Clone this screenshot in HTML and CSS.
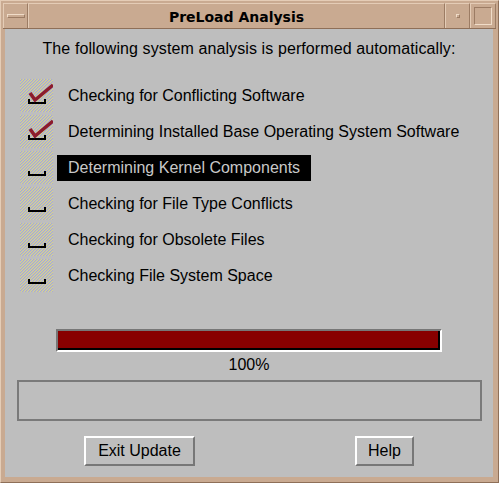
FILE: index.html
```html
<!DOCTYPE html>
<html>
<head>
<meta charset="utf-8">
<title>PreLoad Analysis</title>
<link rel="stylesheet" href="styles.css">
</head>
<body>
<svg class="defs" width="0" height="0" aria-hidden="true">
  <defs>
    <pattern id="stipple" width="3" height="3" patternUnits="userSpaceOnUse">
      <rect width="3" height="3" fill="#bcbcbc"/>
      <rect x="0" y="0" width="1" height="1" fill="#d8d68a"/>
      <rect x="1" y="0" width="1" height="1" fill="#a6a8da"/>
      <rect x="2" y="1" width="1" height="1" fill="#d8d68a"/>
      <rect x="0" y="1" width="1" height="1" fill="#a6a8da"/>
      <rect x="1" y="2" width="1" height="1" fill="#d8d68a"/>
      <rect x="2" y="2" width="1" height="1" fill="#a6a8da"/>
    </pattern>
  </defs>
</svg>
<div class="window">
  <div class="titlebar">
    <div class="tb-btn tb-menu"><span class="menu-bar"></span></div>
    <div class="tb-title">PreLoad Analysis</div>
    <div class="tb-btn tb-min"><span class="min-dot"></span></div>
    <div class="tb-btn tb-max"><span class="max-box"></span></div>
  </div>
  <div class="client">
    <div class="heading">The following system analysis is performed automatically:</div>
    <div class="rows">
      <div class="row">
        <svg class="box" width="33" height="33" viewBox="0 0 33 33">
          <rect width="33" height="33" fill="url(#stipple)" shape-rendering="crispEdges"/>
          <path d="M8 20h2v3h14v-3h2v5H8z" fill="#000" shape-rendering="crispEdges"/>
          <path d="M10 14 L15 21 L33 6" fill="none" stroke="#8c1c2c" stroke-width="3.5"/>
        </svg>
        <div class="label">Checking for Conflicting Software</div>
      </div>
      <div class="row">
        <svg class="box" width="33" height="33" viewBox="0 0 33 33">
          <rect width="33" height="33" fill="url(#stipple)" shape-rendering="crispEdges"/>
          <path d="M8 20h2v3h14v-3h2v5H8z" fill="#000" shape-rendering="crispEdges"/>
          <path d="M10 14 L15 21 L33 6" fill="none" stroke="#8c1c2c" stroke-width="3.5"/>
        </svg>
        <div class="label">Determining Installed Base Operating System Software</div>
      </div>
      <div class="row">
        <svg class="box" width="33" height="33" viewBox="0 0 33 33">
          <rect width="33" height="33" fill="url(#stipple)" shape-rendering="crispEdges"/>
          <path d="M8 20h2v3h14v-3h2v5H8z" fill="#000" shape-rendering="crispEdges"/>
        </svg>
        <div class="label current">Determining Kernel Components</div>
      </div>
      <div class="row">
        <svg class="box" width="33" height="33" viewBox="0 0 33 33">
          <rect width="33" height="33" fill="url(#stipple)" shape-rendering="crispEdges"/>
          <path d="M8 20h2v3h14v-3h2v5H8z" fill="#000" shape-rendering="crispEdges"/>
        </svg>
        <div class="label">Checking for File Type Conflicts</div>
      </div>
      <div class="row">
        <svg class="box" width="33" height="33" viewBox="0 0 33 33">
          <rect width="33" height="33" fill="url(#stipple)" shape-rendering="crispEdges"/>
          <path d="M8 20h2v3h14v-3h2v5H8z" fill="#000" shape-rendering="crispEdges"/>
        </svg>
        <div class="label">Checking for Obsolete Files</div>
      </div>
      <div class="row">
        <svg class="box" width="33" height="33" viewBox="0 0 33 33">
          <rect width="33" height="33" fill="url(#stipple)" shape-rendering="crispEdges"/>
          <path d="M8 20h2v3h14v-3h2v5H8z" fill="#000" shape-rendering="crispEdges"/>
        </svg>
        <div class="label">Checking File System Space</div>
      </div>
    </div>
    <div class="progress"><div class="fill" style="width:100%"></div></div>
    <div class="percent">100%</div>
    <div class="status"></div>
    <div class="buttons">
      <div class="button btn-exit">Exit Update</div>
      <div class="button btn-help">Help</div>
    </div>
  </div>
</div>
</body>
</html>
```

FILE: styles.css
```css
html, body {
  margin: 0;
  padding: 0;
  background: #c9aa91;
}
.defs {
  position: absolute;
  width: 0;
  height: 0;
}
.window {
  width: 499px;
  height: 483px;
  box-sizing: border-box;
  background: #c9aa91;
  border-top: 1px solid #e4ccb6;
  border-left: 1px solid #e4ccb6;
  border-right: 1px solid #8e6f58;
  border-bottom: 1px solid #8e6f58;
  display: flex;
  flex-direction: column;
  font-family: "Liberation Sans", Arial, sans-serif;
}
.titlebar {
  display: flex;
  height: 25px;
  margin: 2px 2px 0 2px;
  border-bottom: 1px solid #8e6f58;
}
.tb-btn, .tb-title {
  box-sizing: border-box;
  border-top: 1px solid #e4ccb6;
  border-left: 1px solid #e4ccb6;
  border-right: 1px solid #9c7c64;
  display: flex;
  align-items: center;
  justify-content: center;
}
.tb-menu { width: 25px; }
.tb-title {
  flex: 1;
  font-family: "DejaVu Sans", sans-serif;
  font-weight: bold;
  font-size: 14px;
  color: #000;
  padding-top: 1px;
}
.tb-min { width: 25px; }
.tb-max { width: 26px; }
.menu-bar {
  width: 16px;
  height: 2px;
  border-top: 1px solid #f0dcc8;
  border-left: 1px solid #f0dcc8;
  border-bottom: 1px solid #9c7c64;
  border-right: 1px solid #9c7c64;
}
.min-dot {
  width: 2px;
  height: 2px;
  border-top: 1px solid #f0dcc8;
  border-left: 1px solid #f0dcc8;
  border-bottom: 1px solid #9c7c64;
  border-right: 1px solid #9c7c64;
}
.max-box {
  width: 16px;
  height: 16px;
  border-top: 1px solid #9c7c64;
  border-left: 1px solid #9c7c64;
  border-bottom: 1px solid #f0dcc8;
  border-right: 1px solid #f0dcc8;
}
.client {
  flex: 1;
  margin: 0 5px 5px 4px;
  background: #bebebe;
  display: flex;
  flex-direction: column;
  font-size: 16px;
  color: #000;
}
.heading {
  margin-top: 11px;
  line-height: 18px;
  text-align: center;
  letter-spacing: 0.1px;
}
.rows {
  margin-top: 21px;
  padding-left: 15px;
  display: flex;
  flex-direction: column;
  gap: 3px;
}
.row {
  display: flex;
  align-items: center;
  height: 33px;
}
.box {
  display: block;
  flex: none;
}
.label {
  margin-left: 4px;
  padding: 0 11px;
  height: 26px;
  line-height: 26px;
  white-space: nowrap;
}
.label.current {
  background: #000;
  color: #c8c8c8;
}
.progress {
  margin: 37px auto 0;
  width: 386px;
  height: 23px;
  box-sizing: border-box;
  border-top: 2px solid #777;
  border-left: 2px solid #777;
  border-right: 2px solid #fff;
  border-bottom: 2px solid #fff;
}
.fill {
  height: 100%;
  box-sizing: border-box;
  background: #880000;
  border-right: 2px solid #000;
  border-bottom: 2px solid #000;
}
.percent {
  margin-top: 4px;
  line-height: 18px;
  text-align: center;
}
.status {
  margin: 6px 11px 0 12px;
  height: 41px;
  box-sizing: border-box;
  border: 2px solid #7a7a7a;
}
.buttons {
  margin-top: 15px;
  padding-left: 79px;
  display: flex;
  gap: 160px;
}
.button {
  height: 30px;
  box-sizing: border-box;
  border-top: 2px solid #fff;
  border-left: 2px solid #fff;
  border-right: 2px solid #777;
  border-bottom: 2px solid #777;
  line-height: 26px;
  text-align: center;
}
.btn-exit { width: 111px; }
.btn-help { width: 59px; }
```
